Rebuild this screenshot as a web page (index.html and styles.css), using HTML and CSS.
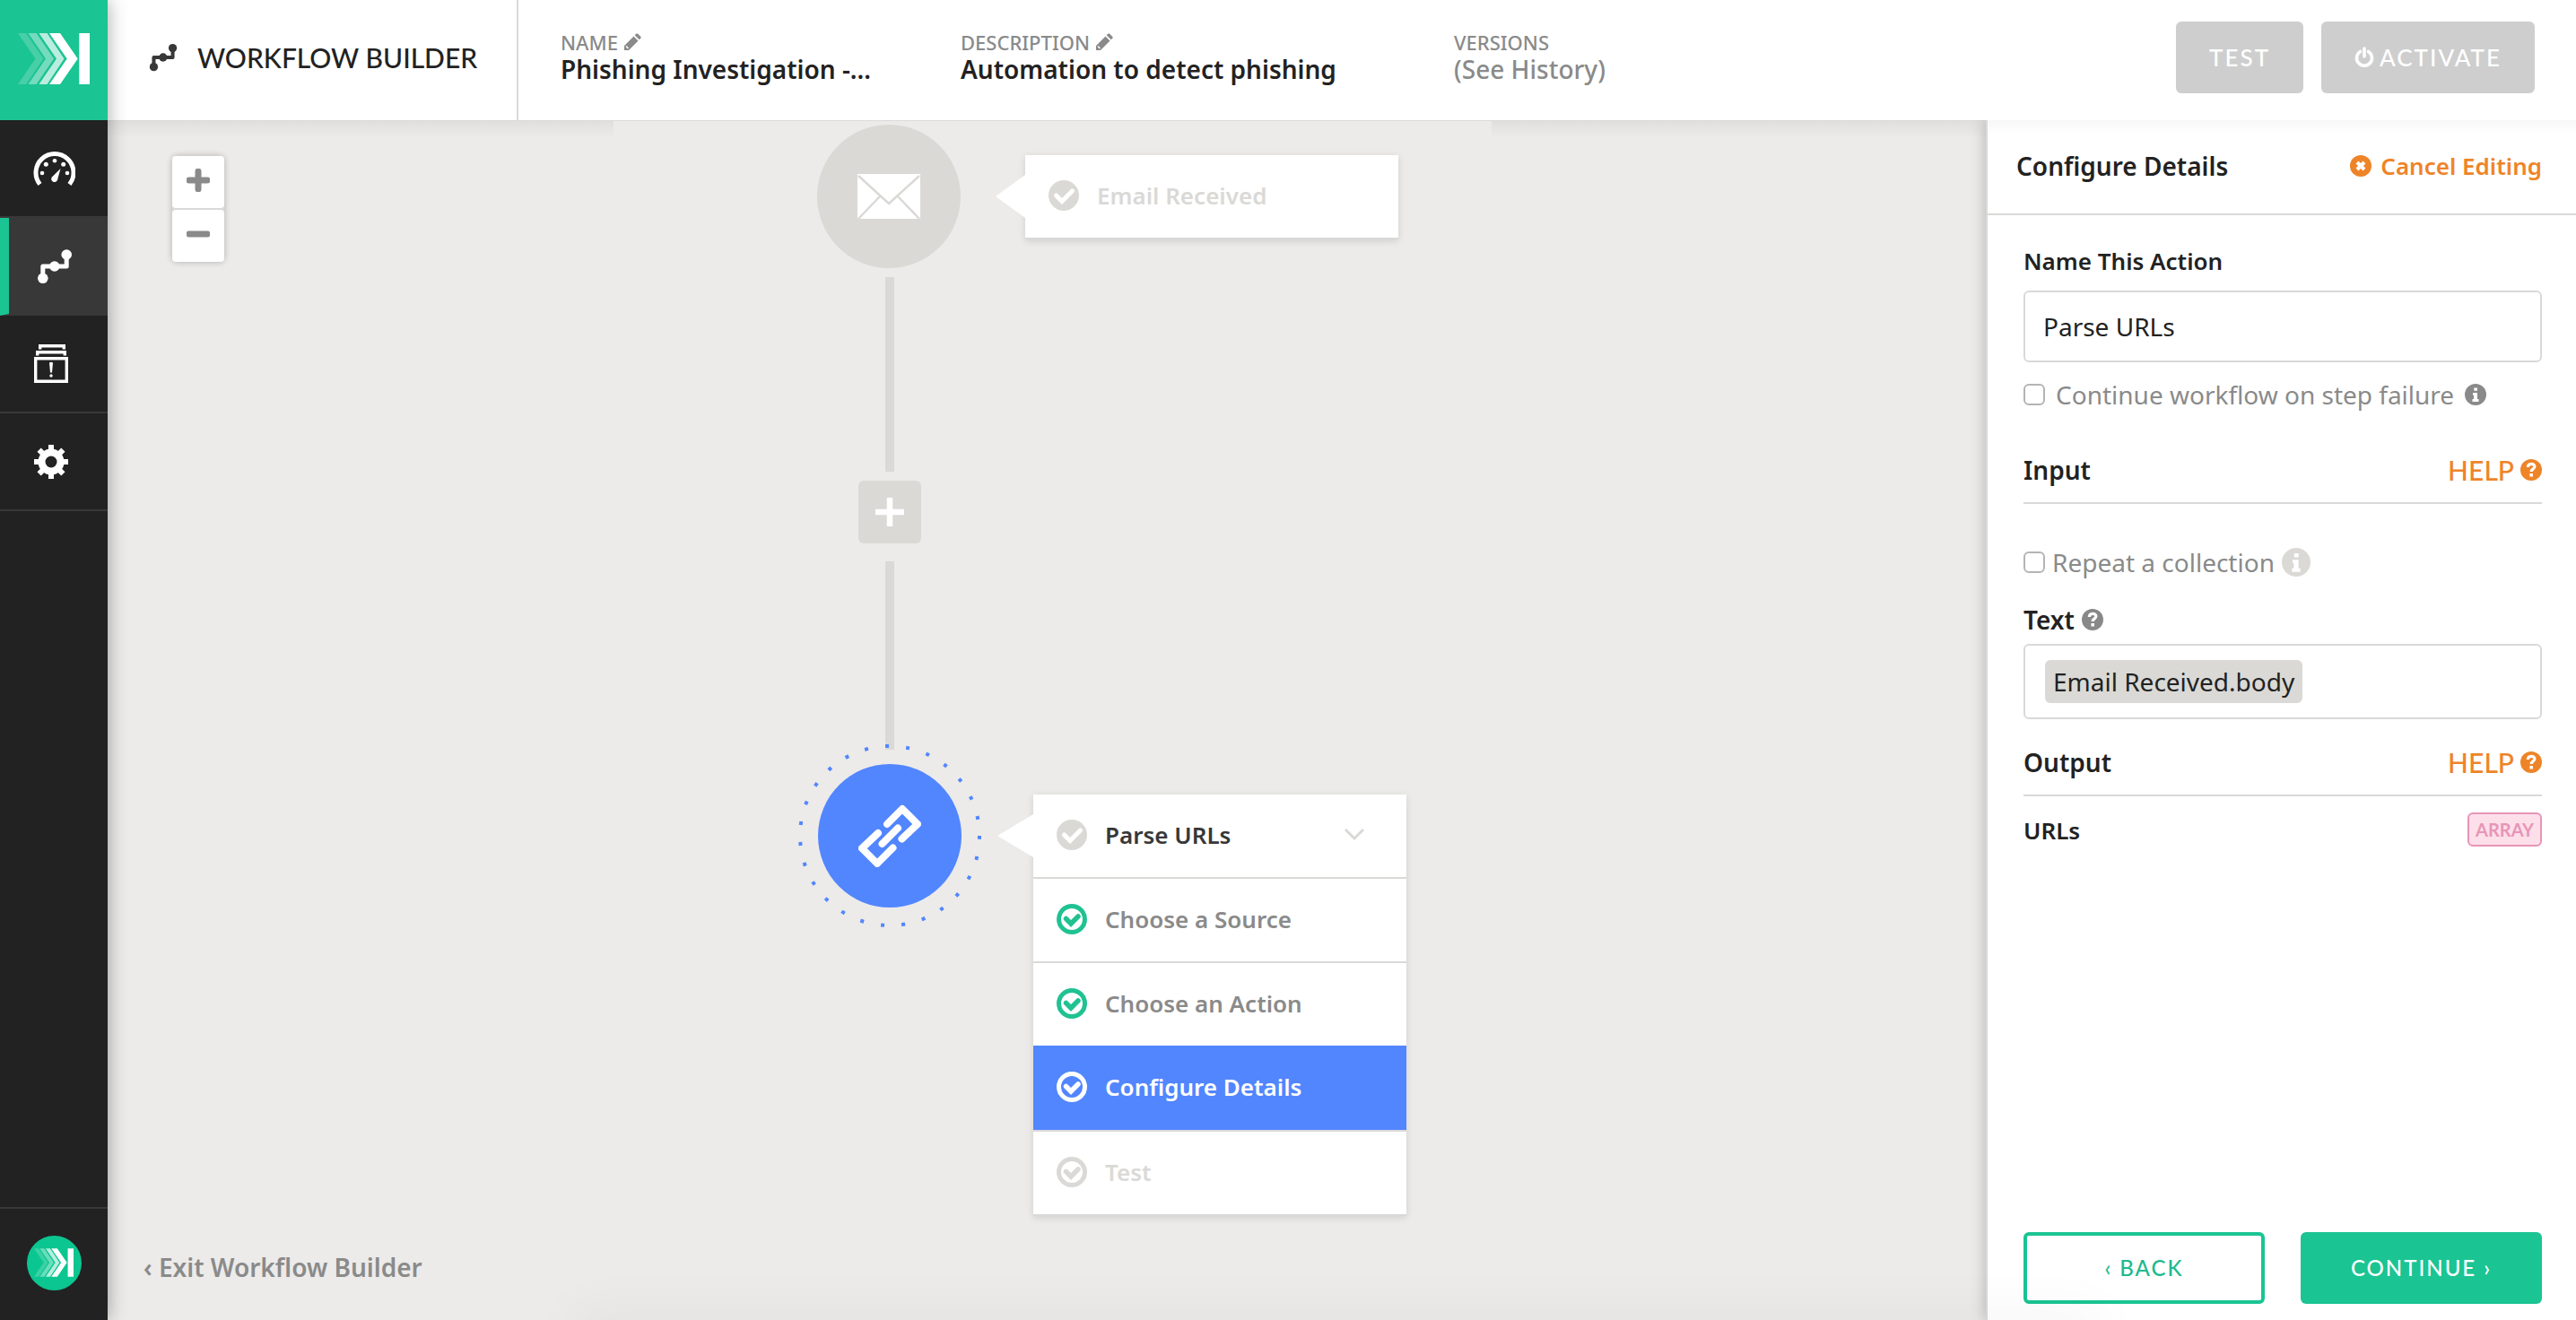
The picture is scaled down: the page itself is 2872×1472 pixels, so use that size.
FILE: index.html
```html
<!DOCTYPE html>
<html lang="en">
<head>
<meta charset="utf-8">
<title>Workflow Builder</title>
<link rel="stylesheet" href="styles.css">
</head>
<body>
<svg class="symbols" aria-hidden="true">
  <symbol id="logo" viewBox="20 37 80 57">
    <path opacity=".2" d="M20 37h9l19.500 28.500L29 94h-9l19.500-28.500z"/>
    <path opacity=".4" d="M31.500 37h9L60 65.500 40.500 94h-9L51 65.500z"/>
    <path opacity=".7" d="M43.500 37h9l19 28.500L52.500 94h-9L63 65.500z"/>
    <path d="M55 37h12l19.700 28.500L67 94H55l19.700-28.500zM88.300 37H100v57H88.300z"/>
  </symbol>
  <symbol id="flow" viewBox="41 277 40 40">
    <path d="M74.200 284v13H47.800v13" fill="none" stroke="currentColor" stroke-width="5" stroke-linejoin="round"/>
    <circle cx="74.200" cy="284" r="5.800"/><circle cx="60.800" cy="297" r="5.800"/><circle cx="47.800" cy="310.300" r="5.800"/>
  </symbol>
  <symbol id="pencil" viewBox="0 0 20 20">
    <path d="M1 14 11.500 3.500l5 5L6 19H1zM12.700 2.300l1.500-1.500q1-1 2 0l3 3q1 1 0 2l-1.500 1.500z"/>
    <path d="M3 14.500 5.500 17" stroke="#fff" stroke-width="1.500"/>
  </symbol>
  <symbol id="check-solid" viewBox="0 0 34 34">
    <circle cx="17" cy="17" r="17"/>
    <path d="m8.500 17 6.500 6.500L26.500 12" fill="none" stroke="#fff" stroke-width="5" stroke-linecap="round"/>
  </symbol>
  <symbol id="check-ring" viewBox="0 0 34 34">
    <circle cx="17" cy="17" r="14.500" fill="none" stroke="currentColor" stroke-width="5"/>
    <path d="m10.500 16.500 5.500 5.500 8-8" fill="none" stroke="currentColor" stroke-width="5.500" stroke-linecap="round"/>
  </symbol>
  <symbol id="info" viewBox="0 0 24 24">
    <circle cx="12" cy="12" r="12"/>
    <path fill="#fff" d="M10.300 4.500H14v3.300h-3.700zM9 10h5v7h1.500v3H8.500v-3H10v-4.200H9z"/>
  </symbol>
  <symbol id="question" viewBox="0 0 24 24">
    <circle cx="12" cy="12" r="12"/>
    <path d="M8.300 9c.3-4.800 7.600-4.500 7.600-.8 0 2.800-3.700 2.600-3.700 5.800" fill="none" stroke="#fff" stroke-width="3.200"/>
    <path fill="#fff" d="M10.400 16h3.600v3.500h-3.600z"/>
  </symbol>
</svg>

<nav class="sidebar" aria-label="Main">
  <a class="brand" href="#" aria-label="Home"><svg class="brand-mark"><use href="#logo"/></svg></a>
  <a class="nav-item" href="#" aria-label="Dashboard">
    <svg class="nav-icon" viewBox="36 164 48 48">
      <path d="M44.500 205.500A21 21 0 1 1 77.500 205.500" fill="none" stroke="currentColor" stroke-width="5"/>
      <circle cx="47" cy="193" r="2.300"/><circle cx="51.300" cy="183.300" r="2.500"/><circle cx="61" cy="179.200" r="2.300"/><circle cx="70.700" cy="183.300" r="2.500"/><circle cx="75" cy="193" r="2.300"/>
      <path d="m67.500 188-9.600 9.500a3.500 3.500 0 1 0 6.200 3z"/>
    </svg>
  </a>
  <a class="nav-item active" href="#" aria-label="Workflows">
    <svg class="nav-icon nav-flow"><use href="#flow"/></svg>
  </a>
  <a class="nav-item" href="#" aria-label="Records">
    <svg class="nav-icon" viewBox="36 382 48 48">
      <path d="M39.700 399.700h34.600v25.600H39.700zM41.700 396.500v-3.700h30.600v3.700M44.700 389.500v-3.800h26.600v3.800" fill="none" stroke="currentColor" stroke-width="3.400"/>
      <path d="M55 404.500q2-1.500 4 0l-1 11h-2z"/><circle cx="57" cy="419" r="1.700"/>
    </svg>
  </a>
  <a class="nav-item" href="#" aria-label="Settings">
    <svg class="nav-icon" viewBox="36 491 48 48">
      <g stroke="currentColor" stroke-width="6"><path d="M57 496v38M38 515h38M43.600 501.600l26.800 26.800M70.400 501.600l-26.800 26.800"/></g>
      <circle cx="57" cy="515" r="14.500"/><circle class="gear-hole" cx="57" cy="515" r="6.500"/>
    </svg>
  </a>
  <a class="account" href="#" aria-label="Account"><span class="avatar"><svg class="avatar-mark"><use href="#logo"/></svg></span></a>
</nav>

<div class="page">
  <header class="topbar">
    <h1 class="app-title"><svg class="title-icon"><use href="#flow"/></svg>WORKFLOW BUILDER</h1>
    <dl class="meta">
      <div><dt>NAME <svg class="pencil"><use href="#pencil"/></svg></dt><dd>Phishing Investigation -...</dd></div>
      <div><dt>DESCRIPTION <svg class="pencil"><use href="#pencil"/></svg></dt><dd>Automation to detect phishing</dd></div>
      <div><dt>VERSIONS</dt><dd><a class="history" href="#">(See History)</a></dd></div>
    </dl>
    <div class="top-actions">
      <button class="btn btn-off" type="button">TEST</button>
      <button class="btn btn-off" type="button"><svg class="power" viewBox="0 0 22 24"><path d="M6.500 5.500a8.500 8.500 0 1 0 9 0M11 2v9" fill="none" stroke="currentColor" stroke-width="3.600" stroke-linecap="round"/></svg>ACTIVATE</button>
    </div>
  </header>

  <div class="workspace">
    <main class="canvas">
      <div class="flow-layer">
        <div class="link link-first"></div>
        <div class="link link-second"></div>
        <div class="node node-trigger">
          <svg class="node-icon" viewBox="0 0 70 70">
            <path fill="#fff" d="M0 10h70v50H0z"/>
            <path d="M1 12l34 31 34-31M1 60l24-25M69 60 45 35" fill="none" stroke="#dad9d6" stroke-width="2.500"/>
          </svg>
        </div>
        <button class="add-step" type="button" aria-label="Add step"><svg class="plus" viewBox="0 0 32 32"><path d="M16 0v32M0 16h32" stroke="#fff" stroke-width="6.500"/></svg></button>
        <svg class="ring" viewBox="-104 -104 208 208"><circle r="100" fill="none" stroke="#5286ff" stroke-width="4" stroke-dasharray="4 19.271"/></svg>
        <div class="node node-action">
          <svg class="node-icon" viewBox="0 0 70 70">
            <g fill="none" stroke="#fff" stroke-width="8" stroke-linecap="round" stroke-linejoin="round">
              <path d="M32 22 49 5 66 22 48.500 38.500"/><path d="M22 32 4 49 21 66 38.500 48.500"/><path d="M26.500 44 44 26.500"/>
            </g>
          </svg>
        </div>
        <section class="card card-trigger">
          <div class="step muted"><svg class="check"><use href="#check-solid"/></svg>Email Received</div>
        </section>
        <section class="card card-action">
          <div class="step title"><svg class="check"><use href="#check-solid"/></svg>Parse URLs<svg class="chevron" viewBox="0 0 24 16"><path d="m2 2 10 10L22 2" fill="none" stroke="currentColor" stroke-width="3"/></svg></div>
          <div class="step done"><svg class="check"><use href="#check-ring"/></svg>Choose a Source</div>
          <div class="step done"><svg class="check"><use href="#check-ring"/></svg>Choose an Action</div>
          <div class="step current"><svg class="check"><use href="#check-ring"/></svg>Configure Details</div>
          <div class="step muted"><svg class="check"><use href="#check-ring"/></svg>Test</div>
        </section>
      </div>
      <div class="zoom">
        <button class="zoom-btn" type="button" aria-label="Zoom in"><svg class="zoom-icon" viewBox="0 0 26 26"><path d="M13 3v20M3 13h20"/></svg></button>
        <button class="zoom-btn" type="button" aria-label="Zoom out"><svg class="zoom-icon" viewBox="0 0 26 26"><path d="M3 13h20"/></svg></button>
      </div>
      <a class="exit" href="#">‹ Exit Workflow Builder</a>
    </main>

    <form class="panel">
      <div class="panel-head">
        <h2 class="panel-title">Configure Details</h2>
        <a class="cancel" href="#"><svg class="cancel-icon" viewBox="0 0 24 24"><circle cx="12" cy="12" r="12"/><path d="m8 8 8 8m0-8-8 8" stroke="#fff" stroke-width="4"/></svg>Cancel Editing</a>
      </div>
      <div class="panel-body">
        <label class="label" for="action-name">Name This Action</label>
        <input class="text-input" id="action-name" type="text" value="Parse URLs">
        <div class="option">
          <input class="tick" id="continue" type="checkbox"><label for="continue">Continue workflow on step failure</label>
          <svg class="hint"><use href="#info"/></svg>
        </div>
        <div class="section section-input"><h3 class="heading">Input</h3><a class="help" href="#">HELP<svg class="hint"><use href="#question"/></svg></a></div>
        <div class="option option-repeat">
          <input class="tick" id="repeat" type="checkbox"><label for="repeat">Repeat a collection</label>
          <svg class="hint-large"><use href="#info"/></svg>
        </div>
        <div class="heading text-label"><span id="text-label">Text</span><svg class="hint"><use href="#question"/></svg></div>
        <div class="token-field" role="textbox" tabindex="0" aria-labelledby="text-label"><span class="token">Email Received.body</span></div>
        <div class="section section-output"><h3 class="heading">Output</h3><a class="help" href="#">HELP<svg class="hint"><use href="#question"/></svg></a></div>
        <div class="output-row"><span class="label">URLs</span><span class="badge">ARRAY</span></div>
      </div>
      <div class="panel-foot">
        <button class="btn btn-outline" type="button">‹ BACK</button>
        <button class="btn btn-primary" type="submit">CONTINUE ›</button>
      </div>
    </form>
    <div class="bottom-shade"></div>
  </div>
</div>
</body>
</html>
```
FILE: styles.css
```css
:root {
  --green: #1bc493;
  --blue: #5286ff;
  --orange: #ee8428;
  --ink: #222;
  --grey: #8a8a8a;
  --line: #d9d9d8;
  --pale: #dad9d6;
  --canvas: #ecebe9;
}
* { box-sizing: border-box; }
body {
  margin: 0;
  min-height: 100vh;
  display: flex;
  font-family: "Noto Sans", sans-serif;
  font-size: 28px;
  line-height: 36px;
  color: var(--ink);
  background: #fff;
}
a { color: inherit; text-decoration: none; }
svg { display: block; flex: none; fill: currentColor; }
button, input { font: inherit; margin: 0; }
h1, h2, h3, dl, dd { margin: 0; }
.symbols { position: absolute; width: 0; height: 0; }

/* Sidebar */
.sidebar {
  flex: none;
  width: 120px;
  display: flex;
  flex-direction: column;
  background: var(--ink);
  color: #fff;
  box-shadow: 0 0 20px rgba(0, 0, 0, .35);
  z-index: 3;
}
.brand {
  height: 134px;
  display: flex;
  align-items: center;
  justify-content: center;
  padding-bottom: 4px;
  background: var(--green);
}
.brand-mark { width: 80px; height: 57px; }
.nav-item {
  height: 109px;
  display: flex;
  align-items: center;
  justify-content: center;
  border-bottom: 2px solid #383838;
}
.nav-item.active { background: #383838; border-left: 10px solid var(--green); padding-right: 10px; }
.nav-icon { width: 48px; height: 48px; }
.nav-flow { width: 40px; height: 40px; margin-left: 2px; }
.gear-hole { fill: var(--ink); }
.account {
  margin-top: auto;
  height: 126px;
  display: flex;
  align-items: center;
  justify-content: center;
  padding-bottom: 4px;
  border-top: 2px solid #383838;
}
.avatar {
  width: 61px;
  height: 61px;
  border-radius: 50%;
  background: #0bc690;
  display: flex;
  align-items: center;
  justify-content: center;
}
.avatar-mark { width: 44px; height: 32px; }

/* Top bar */
.page { flex: 1; min-width: 0; display: flex; flex-direction: column; }
.topbar { height: 134px; display: flex; }
.app-title {
  width: 458px;
  padding: 0 0 6px 46px;
  display: flex;
  align-items: center;
  gap: 22px;
  border-right: 2px solid var(--line);
  font: 500 30px/36px Lato, sans-serif;
}
.title-icon { width: 32px; height: 32px; color: #383838; }
.meta {
  padding: 32px 0 0 47px;
  display: grid;
  grid-template-columns: 446px 550px auto;
  line-height: 30px;
  font-weight: 600;
}
.meta dt { display: flex; align-items: center; gap: 6px; font-size: 22px; font-weight: 500; color: var(--grey); }
.pencil { width: 20px; height: 20px; }
.history { color: var(--grey); font-weight: 500; }
.top-actions { margin-left: auto; padding: 24px 46px 0 0; display: flex; align-items: flex-start; gap: 20px; }
.btn {
  height: 80px;
  padding: 0 37px;
  border: 0;
  border-radius: 6px;
  display: flex;
  align-items: center;
  justify-content: center;
  gap: 6px;
  font: 500 24px/36px Lato, sans-serif;
  letter-spacing: 2px;
  color: #fff;
}
.btn-off { background: #cecece; font-size: 26px; }
.power { width: 22px; height: 28px; }

/* Canvas */
.workspace { flex: 1; display: flex; position: relative; overflow: hidden; }
.canvas {
  flex: 1;
  position: relative;
  background: linear-gradient(#dbdad8 1px, rgba(0, 0, 0, .05) 1px, transparent 20px) var(--canvas);
}
.flow-layer { position: absolute; left: 564px; top: 1px; bottom: 26px; width: 979px; background: var(--canvas); }
.node {
  position: absolute;
  width: 160px;
  height: 160px;
  border-radius: 50%;
  display: flex;
  align-items: center;
  justify-content: center;
}
.node-trigger { left: 227px; top: 4px; background: var(--pale); }
.node-action { left: 228px; top: 717px; background: var(--blue); }
.node-icon { width: 70px; height: 70px; }
.ring { position: absolute; left: 204px; top: 693px; width: 208px; height: 208px; }
.link { position: absolute; left: 303px; width: 10px; background: var(--pale); }
.link-first { top: 174px; height: 217px; }
.link-second { top: 491px; height: 210px; }
.add-step {
  position: absolute;
  left: 273px;
  top: 401px;
  width: 70px;
  height: 70px;
  padding: 0;
  border: 0;
  border-radius: 6px;
  background: var(--pale);
  display: flex;
  align-items: center;
  justify-content: center;
}
.plus { width: 32px; height: 32px; }
.card {
  position: absolute;
  width: 416px;
  background: #fff;
  box-shadow: 0 2px 8px rgba(0, 0, 0, .12);
}
.card::before {
  content: "";
  position: absolute;
  right: 100%;
  top: 22px;
  border: 24px solid transparent;
  border-left: 0;
  border-right: 40px solid #fff;
}
.card-trigger { left: 459px; top: 38px; }
.card-trigger::before { border-right-width: 33px; }
.card-action { left: 468px; top: 751px; }
.step {
  height: 94px;
  padding: 0 46px 2px 26px;
  display: flex;
  align-items: center;
  gap: 20px;
  border-bottom: 2px solid var(--line);
  font-size: 26px;
  font-weight: 600;
}
.title { color: #383838; }
.title .check, .chevron { color: var(--pale); }
.chevron { width: 24px; height: 16px; margin-left: auto; }
.done { color: var(--grey); }
.done .check { color: #20c291; }
.current { background: var(--blue); color: #fff; margin-top: -2px; height: 96px; }
.muted { color: var(--pale); }
.check { width: 34px; height: 34px; }
.zoom {
  position: absolute;
  left: 72px;
  top: 40px;
  display: grid;
  gap: 2px;
  background: var(--line);
  border-radius: 6px;
  box-shadow: 0 0 6px 1px rgba(0, 0, 0, .2);
}
.zoom-btn {
  width: 58px;
  height: 58px;
  padding: 0 0 4px;
  border: 0;
  border-radius: 4px;
  background: #fff;
  display: flex;
  align-items: center;
  justify-content: center;
}
.zoom-icon { width: 26px; height: 26px; stroke: var(--grey); stroke-width: 7px; stroke-linecap: round; }
.exit { position: absolute; left: 40px; bottom: 39px; line-height: 40px; font-weight: 600; color: var(--grey); }

/* Configuration panel */
.panel {
  flex: none;
  width: 658px;
  border-left: 2px solid var(--line);
  display: flex;
  flex-direction: column;
  background: linear-gradient(rgba(0, 0, 0, .03), transparent 16px) #fff;
  box-shadow: 0 0 16px rgba(0, 0, 0, .25);
  z-index: 1;
}
.panel-head {
  height: 106px;
  padding: 0 38px 2px 32px;
  display: flex;
  align-items: center;
  justify-content: space-between;
  border-bottom: 2px solid var(--line);
}
.panel-title { font-size: 28px; font-weight: 600; }
.cancel { display: flex; align-items: center; gap: 10px; font-size: 26px; font-weight: 600; color: var(--orange); }
.cancel-icon { width: 24px; height: 24px; }
.panel-body { padding: 33px 38px 0 40px; }
.label { display: block; font-size: 26px; font-weight: 600; }
.text-input {
  display: block;
  width: 100%;
  height: 80px;
  margin-top: 15px;
  padding: 0 20px;
  border: 2px solid var(--line);
  border-radius: 6px;
  color: var(--ink);
  background: #fff;
}
.option { margin-top: 18px; display: flex; align-items: center; gap: 12px; color: var(--grey); }
.tick {
  appearance: none;
  width: 24px;
  height: 24px;
  border: 2px solid #b4b4b4;
  border-radius: 6px;
  background: #fff;
}
.hint { width: 24px; height: 24px; }
.option-repeat { margin-top: 47px; gap: 8px; }
.hint-large { width: 32px; height: 32px; color: var(--pale); }
.section { display: flex; align-items: center; justify-content: space-between; padding-bottom: 18px; border-bottom: 2px solid var(--line); }
.section-input { margin-top: 48px; }
.section-output { margin-top: 30px; }
.heading { font-size: 28px; font-weight: 600; }
.help { display: flex; align-items: center; gap: 7px; font: 500 30px/36px Lato, sans-serif; color: var(--orange); }
.text-label { margin-top: 28px; display: flex; align-items: center; gap: 8px; }
.text-label .hint { color: #888; }
.token-field {
  margin-top: 9px;
  padding: 16px 22px;
  border: 2px solid var(--line);
  border-radius: 6px;
}
.token { display: inline-block; padding: 0 9px; line-height: 48px; border-radius: 6px; background: var(--pale); vertical-align: top; }
.output-row { margin-top: 18px; display: flex; align-items: flex-end; justify-content: space-between; }
.badge {
  padding: 0 7px;
  border: 2px solid #e795b6;
  border-radius: 6px;
  background: #fddfea;
  color: #e795b6;
  font: 700 20px/34px Lato, sans-serif;
}
.panel-foot { margin-top: auto; padding: 0 38px 18px 40px; display: grid; grid-template-columns: 1fr 1fr; gap: 40px; }
.btn-outline { border: 4px solid var(--green); background: transparent; color: #20b98c; }
.btn-primary { background: var(--green); }

/* Soft shade along the bottom edge */
.bottom-shade {
  position: absolute;
  left: 520px;
  right: 530px;
  bottom: -20px;
  height: 20px;
  box-shadow: 0 0 60px rgba(0, 0, 0, .09);
  pointer-events: none;
  z-index: 2;
}
```
